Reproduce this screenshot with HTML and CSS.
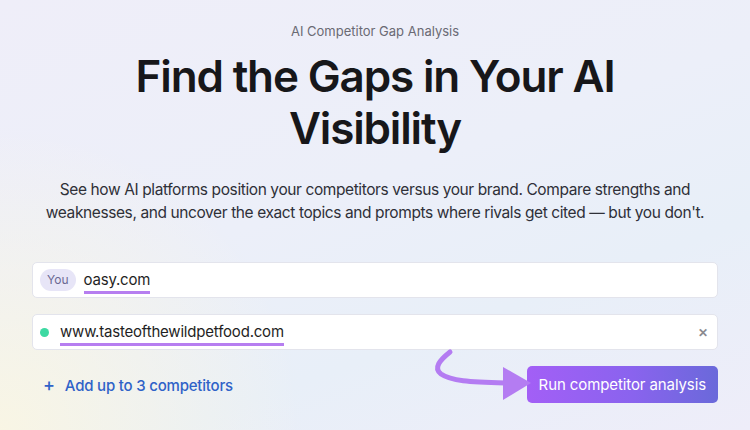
FILE: index.html
```html
<!DOCTYPE html>
<html lang="en">
<head>
<meta charset="utf-8">
<title>AI Competitor Gap Analysis</title>
<link rel="stylesheet" href="styles.css">
</head>
<body>
<main class="page">
  <p class="eyebrow">AI Competitor Gap Analysis</p>
  <h1 class="title">Find the Gaps in Your AI<br>Visibility</h1>
  <p class="lead">See how AI platforms position your competitors versus your brand. Compare strengths and weaknesses, and uncover the exact topics and prompts where rivals get cited — but you don't.</p>

  <form class="form">
    <div class="field">
      <span class="badge">You</span>
      <span class="value">oasy.com</span>
    </div>
    <div class="field">
      <span class="dot"></span>
      <span class="value">www.tasteofthewildpetfood.com</span>
      <span class="close">&#x2715;</span>
    </div>
    <div class="actions">
      <span class="add"><span class="plus">+</span>Add up to 3 competitors</span>
      <span class="btn">Run competitor analysis</span>
      <svg class="arrow" width="110" height="60" viewBox="0 0 110 60" aria-hidden="true">
        <path d="M23 2 C 13 10, 6 18, 14 24 C 24 31, 42 32, 78 33" fill="none" stroke="#b47cf2" stroke-width="5" stroke-linecap="round"/>
        <polygon points="76,17 76,50 104,33" fill="#b47cf2"/>
      </svg>
    </div>
  </form>
</main>
</body>
</html>
```
FILE: styles.css
```css
* { box-sizing: border-box; }
html, body { margin: 0; padding: 0; }
body {
  width: 750px;
  height: 430px;
  overflow: hidden;
  font-family: Inter, "Noto Sans", sans-serif;
  background:
    radial-gradient(circle at 0% 100%, rgba(250, 246, 226, 0.9) 0%, rgba(250, 246, 226, 0) 35%),
    linear-gradient(160deg, #efeef9 0%, #eceff9 45%, #e8eff8 70%, #eeedf9 100%);
  color: #17171c;
}
.page {
  display: flex;
  flex-direction: column;
  align-items: center;
  padding-top: 22px;
}
.eyebrow {
  margin: 0;
  font-size: 13px;
  line-height: 18px;
  color: #6a6a74;
}
.title {
  margin: 10px 0 0;
  font-size: 44px;
  line-height: 52px;
  font-weight: 600;
  letter-spacing: -1.15px;
  text-align: center;
  color: #17171a;
}
.lead {
  margin: 24px 0 0;
  width: 700px;
  font-size: 15.5px;
  line-height: 23px;
  letter-spacing: -0.4px;
  text-align: center;
  color: #2f3038;
}
.form {
  width: 686px;
  margin-top: 38px;
  display: flex;
  flex-direction: column;
  gap: 16px;
}
.field {
  height: 36px;
  background: #ffffff;
  border: 1px solid #e3e4ec;
  border-radius: 5px;
  display: flex;
  align-items: center;
  padding: 0 9px 0 7px;
}
.badge {
  background: #e7e5f7;
  color: #6a6893;
  font-size: 12px;
  border-radius: 11px;
  height: 22px;
  line-height: 22px;
  padding: 0 7px;
  margin-right: 8px;
}
.value {
  font-size: 15px;
  letter-spacing: -0.2px;
  color: #1f1f24;
  line-height: 20px;
  border-bottom: 3px solid #b67ef0;
  padding-bottom: 1px;
  margin-top: 4px;
}
.dot {
  width: 9px;
  height: 9px;
  border-radius: 50%;
  background: #3dd9a2;
  margin: 0 11px 0 0;
}
.close {
  margin-left: auto;
  color: #8a8a90;
  font-size: 12px;
  font-weight: 600;
}
.actions {
  position: relative;
  display: flex;
  align-items: center;
  justify-content: space-between;
  height: 38px;
  margin-top: -1px;
}
.add {
  color: #2f62c8;
  font-size: 15px;
  letter-spacing: -0.2px;
  font-weight: 500;
  padding-left: 11px;
}
.plus {
  font-size: 18px;
  font-weight: 500;
  margin-right: 10px;
}
.btn {
  height: 37px;
  line-height: 37px;
  padding: 0 12px;
  border-radius: 5px;
  background: linear-gradient(90deg, #a35ff6 0%, #8a63ee 55%, #6a69da 100%);
  color: #ffffff;
  font-size: 15px;
  letter-spacing: -0.1px;
}
.arrow {
  position: absolute;
  left: 395px;
  top: -15px;
  overflow: visible;
}
```
